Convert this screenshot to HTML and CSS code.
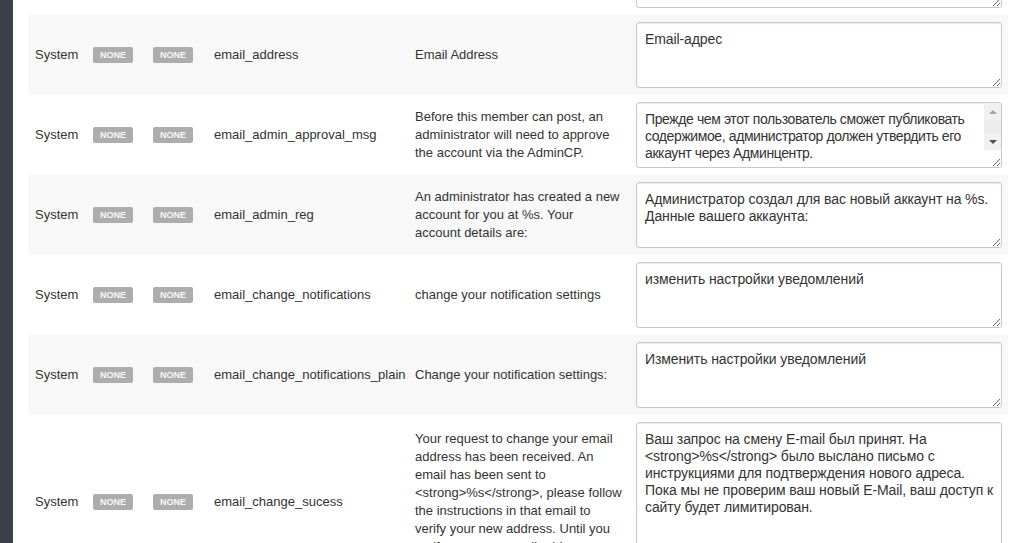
FILE: index.html
```html
<!DOCTYPE html>
<html lang="ru">
<head>
<meta charset="utf-8">
<title>Phrases</title>
<link rel="stylesheet" href="styles.css">
</head>
<body>
<div class="page">
  <aside class="sidebar"></aside>
  <main class="content">
    <table class="phrases">
      <colgroup>
        <col class="c-group">
        <col class="c-state">
        <col class="c-state2">
        <col class="c-key">
        <col class="c-text">
        <col class="c-field">
      </colgroup>
      <tbody>
        <tr>
          <td>System</td>
          <td><span class="badge">NONE</span></td>
          <td><span class="badge">NONE</span></td>
          <td>email</td>
          <td>Email</td>
          <td class="field"><textarea>E-mail</textarea></td>
        </tr>
        <tr>
          <td>System</td>
          <td><span class="badge">NONE</span></td>
          <td><span class="badge">NONE</span></td>
          <td>email_address</td>
          <td>Email Address</td>
          <td class="field"><textarea>Email-адрес</textarea></td>
        </tr>
        <tr>
          <td>System</td>
          <td><span class="badge">NONE</span></td>
          <td><span class="badge">NONE</span></td>
          <td>email_admin_approval_msg</td>
          <td>Before this member can post, an administrator will need to approve the account via the AdminCP.</td>
          <td class="field">
            <div class="scrollbox">
              <textarea class="scrolled">Прежде чем этот пользователь сможет публиковать содержимое, администратор должен утвердить его аккаунт через Админцентр.</textarea>
              <div class="vscroll">
                <span class="arrow up"></span>
                <span class="thumb"></span>
                <span class="arrow down"></span>
              </div>
            </div>
          </td>
        </tr>
        <tr>
          <td>System</td>
          <td><span class="badge">NONE</span></td>
          <td><span class="badge">NONE</span></td>
          <td>email_admin_reg</td>
          <td>An administrator has created a new account for you at %s. Your account details are:</td>
          <td class="field"><textarea>Администратор создал для вас новый аккаунт на %s. Данные вашего аккаунта:</textarea></td>
        </tr>
        <tr>
          <td>System</td>
          <td><span class="badge">NONE</span></td>
          <td><span class="badge">NONE</span></td>
          <td>email_change_notifications</td>
          <td>change your notification settings</td>
          <td class="field"><textarea>изменить настройки уведомлений</textarea></td>
        </tr>
        <tr>
          <td>System</td>
          <td><span class="badge">NONE</span></td>
          <td><span class="badge">NONE</span></td>
          <td>email_change_notifications_plain</td>
          <td>Change your notification settings:</td>
          <td class="field"><textarea>Изменить настройки уведомлений</textarea></td>
        </tr>
        <tr>
          <td>System</td>
          <td><span class="badge">NONE</span></td>
          <td><span class="badge">NONE</span></td>
          <td>email_change_sucess</td>
          <td>Your request to change your email address has been received. An email has been sent to &lt;strong&gt;%s&lt;/strong&gt;, please follow the instructions in that email to verify your new address. Until you verify your new email address, your access to the site will be limited.</td>
          <td class="field"><textarea class="tall">Ваш запрос на смену E-mail был принят. На &lt;strong&gt;%s&lt;/strong&gt; было выслано письмо с инструкциями для подтверждения нового адреса. Пока мы не проверим ваш новый E-Mail, ваш доступ к сайту будет лимитирован.</textarea></td>
        </tr>
      </tbody>
    </table>
  </main>
</div>
</body>
</html>
```

FILE: styles.css
```css
html, body {
  margin: 0;
  padding: 0;
  background: #fff;
}

body {
  font-family: "Liberation Sans", Arial, sans-serif;
  font-size: 13px;
  line-height: 18px;
  color: #333;
}

.page {
  display: flex;
  height: 543px;
  overflow: hidden;
}

.sidebar {
  flex: none;
  width: 13px;
  background: #3a4148;
}

.content {
  flex: 1;
  padding: 0 16px 0 15px;
}

/* list is scrolled: first row sits partly above the top edge */
.phrases {
  width: 980px;
  margin-top: -65px;
  border-collapse: collapse;
  table-layout: fixed;
}

.c-group { width: 58px; }
.c-state { width: 60px; }
.c-state2 { width: 61px; }
.c-key { width: 201px; }
.c-text { width: 221px; }
.c-field { width: 379px; }

.phrases td {
  padding: 7px;
  vertical-align: middle;
  white-space: normal;
}

.phrases tr:nth-child(even) td {
  background: #f8f8f8;
}

.badge {
  display: block;
  width: 40px;
  height: 16px;
  border-radius: 2px;
  background: #adadad;
  color: #f7f8fc;
  font-size: 9px;
  font-weight: 700;
  line-height: 16px;
  text-align: center;
}

.phrases td.field {
  padding: 7px 6px 7px 7px;
}

.field textarea {
  display: block;
  box-sizing: border-box;
  width: 100%;
  height: 66px;
  margin: 0;
  padding: 8px 2px 8px 8px;
  border: 1px solid #c9c9c9;
  border-radius: 3px;
  box-shadow: inset 0 1px 1px rgba(0, 0, 0, 0.08);
  background: #fff;
  color: #333;
  font-family: "Liberation Sans", Arial, sans-serif;
  font-size: 14px;
  line-height: 17px;
  letter-spacing: -0.1px;
  resize: vertical;
}

.field textarea.tall {
  height: 160px;
}

/* textarea whose text overflows: a vertical scrollbar sits over its right edge */
.scrollbox {
  position: relative;
}

.field textarea.scrolled {
  padding-right: 19px;
  letter-spacing: -0.4px;
  overflow: hidden;
}

.vscroll {
  position: absolute;
  top: 1px;
  right: 1px;
  bottom: 18px;
  width: 17px;
  display: flex;
  flex-direction: column;
  background: #f1f1f1;
  border-top-right-radius: 2px;
}

.vscroll .arrow {
  flex: none;
  height: 17px;
  display: flex;
  align-items: center;
  justify-content: center;
}

.vscroll .thumb {
  flex: 1;
  background: #ececec;
}

.vscroll .arrow::before {
  content: "";
  width: 0;
  height: 0;
  border-left: 4px solid transparent;
  border-right: 4px solid transparent;
}

.vscroll .arrow.up::before {
  border-bottom: 4px solid #a3a3a3;
}

.vscroll .arrow.down::before {
  border-top: 4px solid #505050;
}
```
